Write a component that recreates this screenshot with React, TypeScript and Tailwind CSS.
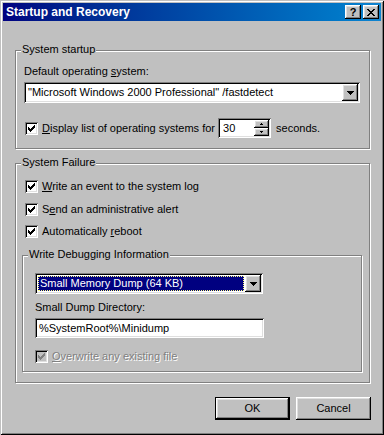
import type { ReactNode } from 'react';

const raised =
  'shadow-[inset_-1px_-1px_0_#000,inset_1px_1px_0_#fff,inset_-2px_-2px_0_#808080,inset_2px_2px_0_#dfdfdf]';
const sunken =
  'shadow-[inset_1px_1px_0_#808080,inset_-1px_-1px_0_#fff,inset_2px_2px_0_#000,inset_-2px_-2px_0_#dfdfdf]';

function CheckMark({ color = '#000' }: { color?: string }) {
  const rows: [number, number, number][] = [
    [0, 6, 1],
    [1, 5, 2],
    [2, 0, 1],
    [2, 4, 3],
    [3, 0, 2],
    [3, 3, 3],
    [4, 0, 5],
    [5, 1, 3],
    [6, 2, 1],
  ];
  return (
    <svg width="7" height="7" viewBox="0 0 7 7" shapeRendering="crispEdges">
      {rows.map(([y, x, w], i) => (
        <rect key={i} x={x} y={y} width={w} height={1} fill={color} />
      ))}
    </svg>
  );
}

function Checkbox({ label, disabled }: { label: ReactNode; disabled?: boolean }) {
  return (
    <div className="flex items-center h-[13px]">
      <div
        className={`w-[13px] h-[13px] shrink-0 flex items-center justify-center ${sunken} ${
          disabled ? 'bg-[#c0c0c0]' : 'bg-white'
        }`}
      >
        <CheckMark color={disabled ? '#808080' : '#000'} />
      </div>
      <span
        className={`ml-[4px] whitespace-nowrap ${
          disabled ? 'text-[#808080] [text-shadow:1px_1px_0_#fff]' : ''
        }`}
      >
        {label}
      </span>
    </div>
  );
}

function DownArrow() {
  return (
    <svg width="7" height="4" viewBox="0 0 7 4" shapeRendering="crispEdges">
      <rect x="0" y="0" width="7" height="1" fill="#000" />
      <rect x="1" y="1" width="5" height="1" fill="#000" />
      <rect x="2" y="2" width="3" height="1" fill="#000" />
      <rect x="3" y="3" width="1" height="1" fill="#000" />
    </svg>
  );
}

function DropButton() {
  return (
    <div className={`w-[16px] h-[17px] bg-[#c0c0c0] flex items-center justify-center shrink-0 ${raised}`}>
      <DownArrow />
    </div>
  );
}

function GroupBox({ label, className, children }: { label: string; className: string; children: ReactNode }) {
  return (
    <div className={`relative border border-[#808080] shadow-[inset_1px_1px_0_#fff,1px_1px_0_#fff] ${className}`}>
      <span className="absolute left-[5px] top-[-8px] px-[1px] bg-[#c0c0c0] whitespace-nowrap">{label}</span>
      {children}
    </div>
  );
}

function SpinArrow({ up }: { up?: boolean }) {
  return (
    <svg width="3" height="2" viewBox="0 0 3 2" shapeRendering="crispEdges">
      <rect x="1" y={up ? 0 : 1} width="1" height="1" fill="#000" />
      <rect x="0" y={up ? 1 : 0} width="3" height="1" fill="#000" />
    </svg>
  );
}

export default function App() {
  return (
    <div
      className={`w-[384px] h-[435px] bg-[#c0c0c0] p-[3px] flex flex-col text-black text-[11px] leading-[13px] font-['Liberation_Sans',Arial,sans-serif] shadow-[inset_1px_1px_0_#c0c0c0,inset_-1px_-1px_0_#000,inset_2px_2px_0_#fff,inset_-2px_-2px_0_#808080]`}
    >
      {/* title bar */}
      <div className="h-[18px] flex items-center bg-gradient-to-r from-[#000080] to-[#1084d0] pl-[3px] pr-[2px]">
        <span className="text-white font-bold text-[12px] leading-[14px] flex-1">Startup and Recovery</span>
        <div className={`w-[16px] h-[14px] bg-[#c0c0c0] flex items-center justify-center font-bold text-[11px] leading-[11px] ${raised}`}>
          ?
        </div>
        <div className={`ml-[2px] w-[16px] h-[14px] bg-[#c0c0c0] flex items-center justify-center ${raised}`}>
          <svg width="8" height="7" viewBox="0 0 8 7" shapeRendering="crispEdges">
            <rect x="0" y="0" width="2" height="1" />
            <rect x="6" y="0" width="2" height="1" />
            <rect x="1" y="1" width="2" height="1" />
            <rect x="5" y="1" width="2" height="1" />
            <rect x="2" y="2" width="4" height="1" />
            <rect x="3" y="3" width="2" height="1" />
            <rect x="2" y="4" width="4" height="1" />
            <rect x="1" y="5" width="2" height="1" />
            <rect x="5" y="5" width="2" height="1" />
            <rect x="0" y="6" width="2" height="1" />
            <rect x="6" y="6" width="2" height="1" />
          </svg>
        </div>
      </div>

      <div className="flex flex-col pl-[12px] pr-[11px]">
        {/* System startup */}
        <GroupBox label="System startup" className="mt-[29px] pt-[14px] pb-[10px] pl-[8px] pr-[9px]">
          <div className="h-[13px]">
            Default operating <span className="underline">s</span>ystem:
          </div>
          <div className={`mt-[4px] h-[21px] bg-white flex items-center p-[2px] ${sunken}`}>
            <span className="flex-1 pl-[2px] whitespace-nowrap">"Microsoft Windows 2000 Professional" /fastdetect</span>
            <DropButton />
          </div>
          <div className="mt-[15px] h-[20px] flex items-center">
            <div className="pl-[1px]">
              <Checkbox
                label={
                  <>
                    <span className="underline">D</span>isplay list of operating systems for
                  </>
                }
              />
            </div>
            <div className={`ml-[3px] w-[53px] h-[20px] bg-white flex items-center p-[2px] ${sunken}`}>
              <span className="flex-1 pl-[3px]">30</span>
              <div className="flex flex-col">
                <div className={`w-[15px] h-[8px] bg-[#c0c0c0] flex items-center justify-center ${raised}`}>
                  <SpinArrow up />
                </div>
                <div className={`w-[15px] h-[8px] bg-[#c0c0c0] flex items-center justify-center ${raised}`}>
                  <SpinArrow />
                </div>
              </div>
            </div>
            <span className="ml-[5px]">seconds.</span>
          </div>
        </GroupBox>

        {/* System Failure */}
        <GroupBox label="System Failure" className="mt-[14px] pt-[16px] pb-[10px] pl-[6px] pr-[7px]">
          <div className="pl-[3px] flex flex-col">
            <Checkbox
              label={
                <>
                  <span className="underline">W</span>rite an event to the system log
                </>
              }
            />
            <div className="mt-[10px]">
              <Checkbox
                label={
                  <>
                    S<span className="underline">e</span>nd an administrative alert
                  </>
                }
              />
            </div>
            <div className="mt-[9px]">
              <Checkbox
                label={
                  <>
                    Automatically <span className="underline">r</span>eboot
                  </>
                }
              />
            </div>
          </div>

          <GroupBox label="Write Debugging Information" className="mt-[17px] pt-[17px] pb-[8px] pl-[12px]">
            <div className={`w-[228px] h-[21px] bg-white flex items-center p-[2px] ${sunken}`}>
              <div className="flex-1 h-[17px] p-[1px]">
                <div className="h-full bg-[#000080] text-white border border-dotted border-[#ffff80] flex items-center pl-[1px] whitespace-nowrap">
                  Small Memory Dump (64 KB)
                </div>
              </div>
              <DropButton />
            </div>
            <div className="mt-[7px] h-[13px]">Small Dump Directory:</div>
            <div className={`mt-[4px] w-[229px] h-[20px] bg-white flex items-center p-[2px] ${sunken}`}>
              <span className="pl-[2px]">%SystemRoot%\Minidump</span>
            </div>
            <div className="mt-[12px]">
              <Checkbox
                disabled
                label={
                  <>
                    <span className="underline">O</span>verwrite any existing file
                  </>
                }
              />
            </div>
          </GroupBox>
        </GroupBox>

        {/* buttons */}
        <div className="mt-[14px] flex justify-end gap-[6px] mr-[-1px]">
          <div className="w-[75px] h-[23px] border border-black">
            <div className={`w-full h-full bg-[#c0c0c0] flex items-center justify-center ${raised}`}>OK</div>
          </div>
          <div className={`w-[75px] h-[23px] bg-[#c0c0c0] flex items-center justify-center ${raised}`}>Cancel</div>
        </div>
      </div>
    </div>
  );
}
